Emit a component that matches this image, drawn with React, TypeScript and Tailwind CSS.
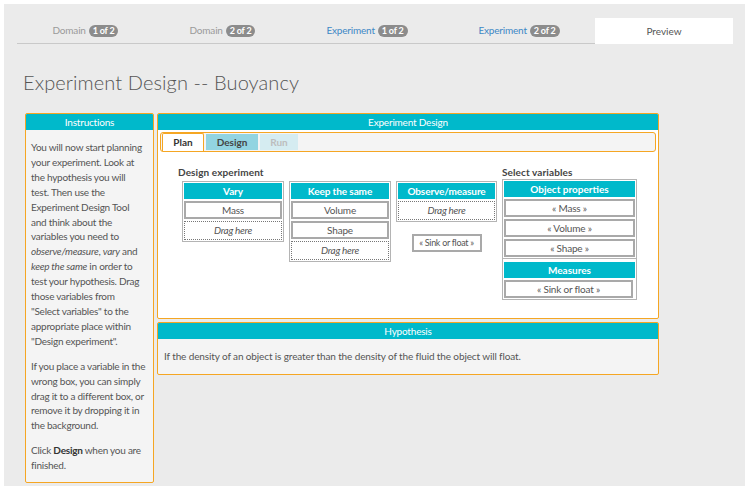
import React from 'react';

const font = { fontFamily: 'Lato, "Noto Sans", sans-serif' };

const steps = [
  { label: 'Domain', badge: '1 of 2', w: 'w-[137px]', blue: false },
  { label: 'Domain', badge: '2 of 2', w: 'w-[137px]', blue: false },
  { label: 'Experiment', badge: '1 of 2', w: 'w-[152px]', blue: true },
  { label: 'Experiment', badge: '2 of 2', w: 'w-[152px]', blue: true },
];

function Badge({ text }: { text: string }) {
  return (
    <span className="ml-[3px] inline-flex items-center h-[12px] px-[4px] rounded-full bg-[#8c8c8c] text-white text-[9px] font-bold leading-none">
      {text}
    </span>
  );
}

function Panel({ title, className, children }: { title: string; className?: string; children: React.ReactNode }) {
  return (
    <div className={`border border-[#f5a623] rounded-[2px] overflow-hidden ${className ?? ''}`}>
      <div className="h-[16px] bg-[#00b9cb] text-white text-[10px] flex items-center justify-center tracking-[-0.2px]">
        {title}
      </div>
      {children}
    </div>
  );
}

function Item({ text }: { text: string }) {
  return (
    <div className="h-[18px] border-2 border-[#a9a9a9] bg-white flex items-center justify-center text-[10px] text-[#555] tracking-[-0.2px]">
      {text}
    </div>
  );
}

function DragHere() {
  return (
    <div className="h-[19px] border border-dotted border-[#777] bg-white flex items-center justify-center text-[10px] italic text-[#555] tracking-[-0.3px]">
      Drag here
    </div>
  );
}

function Column({ title, w, children }: { title: string; w: string; children: React.ReactNode }) {
  return (
    <div className={`${w} border border-[#b4b4b4] p-[1px] bg-white flex flex-col gap-[2px]`}>
      <div className="h-[16px] bg-[#00b9cb] text-white text-[10px] font-bold flex items-center justify-center tracking-[-0.1px]">
        {title}
      </div>
      {children}
    </div>
  );
}

export default function App() {
  return (
    <div className="min-h-screen bg-white pt-[4px] pl-[4px]" style={font}>
      <div className="w-[741px] min-h-[482px] bg-[#ebebeb] pt-[14px]">
        {/* step tabs */}
        <div className="flex ml-[13px] h-[26px]">
          {steps.map((s, i) => (
            <div
              key={i}
              className={`${s.w} flex items-center justify-center border-b border-[#c9c9c9] text-[10px] tracking-[-0.2px] ${
                s.blue ? 'text-[#3d88c6]' : 'text-[#9a9a9a]'
              }`}
            >
              {s.label}
              <Badge text={s.badge} />
            </div>
          ))}
          <div className="w-[138px] bg-white flex items-center justify-center text-[10px] text-[#555]">Preview</div>
        </div>

        <h1 className="ml-[19px] mt-[26px] text-[20px] leading-[24px] text-[#555] font-light tracking-[0.1px]">
          Experiment Design -- Buoyancy
        </h1>

        <div className="flex items-start ml-[21px] mt-[19px] gap-[3px]">
          {/* instructions */}
          <Panel title="Instructions" className="w-[129px] bg-[#f4f4f4]">
            <div className="px-[5px] pt-[10px] pb-[9px] text-[10px] leading-[14.9px] text-[#555] tracking-[-0.25px] whitespace-nowrap">
              <p>
                You will now start planning<br />
                your experiment. Look at<br />
                the hypothesis you will<br />
                test. Then use the<br />
                Experiment Design Tool<br />
                and think about the<br />
                variables you need to<br />
                <i>observe/measure</i>, <i>vary</i> and<br />
                <i>keep the same</i> in order to<br />
                test your hypothesis. Drag<br />
                those variables from<br />
                "Select variables" to the<br />
                appropriate place within<br />
                "Design experiment".
              </p>
              <p className="mt-[10px]">
                If you place a variable in the<br />
                wrong box, you can simply<br />
                drag it to a different box, or<br />
                remove it by dropping it in<br />
                the background.
              </p>
              <p className="mt-[10px]">
                Click <b className="text-[#333]">Design</b> when you are<br />
                finished.
              </p>
            </div>
          </Panel>

          <div className="flex flex-col gap-[3px]">
            <Panel title="Experiment Design" className="w-[502px] bg-white">
              <div className="mx-[2px] mt-[2px] h-[20px] bg-[#f4f4f4] border border-[#f5a623] rounded-[3px] flex items-end pl-[1px] gap-[2px]">
                <div className="w-[42px] h-[18px] bg-white border border-b-0 border-[#f5a623] rounded-t-[2px] flex items-center justify-center text-[10px] font-bold text-[#333]">
                  Plan
                </div>
                <div className="w-[52px] h-[16px] mb-[1px] bg-[#92d4e1] flex items-center justify-center text-[10px] font-bold text-[#444]">
                  Design
                </div>
                <div className="w-[38px] h-[16px] mb-[1px] bg-[#d5ecf1] flex items-center justify-center text-[10px] font-bold text-[#bdbdbd]">
                  Run
                </div>
              </div>

              <div className="flex pl-[20px] pt-[13px] pb-[18px]">
                <div>
                  <div className="text-[10px] font-bold text-[#444] leading-[14px] tracking-[0.1px]">Design experiment</div>
                  <div className="flex items-start gap-[5px] ml-[4px] mt-[2px]">
                    <Column title="Vary" w="w-[102px]">
                      <Item text="Mass" />
                      <DragHere />
                    </Column>
                    <Column title="Keep the same" w="w-[102px]">
                      <Item text="Volume" />
                      <Item text="Shape" />
                      <DragHere />
                    </Column>
                    <div className="flex flex-col items-center">
                      <Column title="Observe/measure" w="w-[101px]">
                        <DragHere />
                      </Column>
                      <div className="mt-[12px] w-[70px] h-[18px] border-2 border-[#a9a9a9] bg-white flex items-center justify-center text-[9px] text-[#555] tracking-[-0.3px]">
                        « Sink or float »
                      </div>
                    </div>
                  </div>
                </div>

                <div className="ml-[5px]">
                  <div className="text-[10px] font-bold text-[#444] leading-[14px] tracking-[0.1px]">Select variables</div>
                  <div className="w-[135px] border border-[#b4b4b4] bg-white">
                    <div className="p-[1px] flex flex-col gap-[2px] border-b border-[#b4b4b4]">
                      <div className="h-[16px] bg-[#00b9cb] text-white text-[10px] font-bold flex items-center justify-center">
                        Object properties
                      </div>
                      <Item text="« Mass »" />
                      <Item text="« Volume »" />
                      <Item text="« Shape »" />
                    </div>
                    <div className="p-[1px] pt-[3px] flex flex-col gap-[2px]">
                      <div className="h-[16px] bg-[#00b9cb] text-white text-[10px] font-bold flex items-center justify-center">
                        Measures
                      </div>
                      <div className="mr-[2px]">
                        <Item text="« Sink or float »" />
                      </div>
                    </div>
                  </div>
                </div>
              </div>
            </Panel>

            <Panel title="Hypothesis" className="w-[502px] bg-[#f4f4f4]">
              <div className="h-[35px] pl-[6px] flex items-center text-[10px] text-[#555] tracking-[-0.12px]">
                If the density of an object is greater than the density of the fluid the object will float.
              </div>
            </Panel>
          </div>
        </div>
      </div>
    </div>
  );
}
